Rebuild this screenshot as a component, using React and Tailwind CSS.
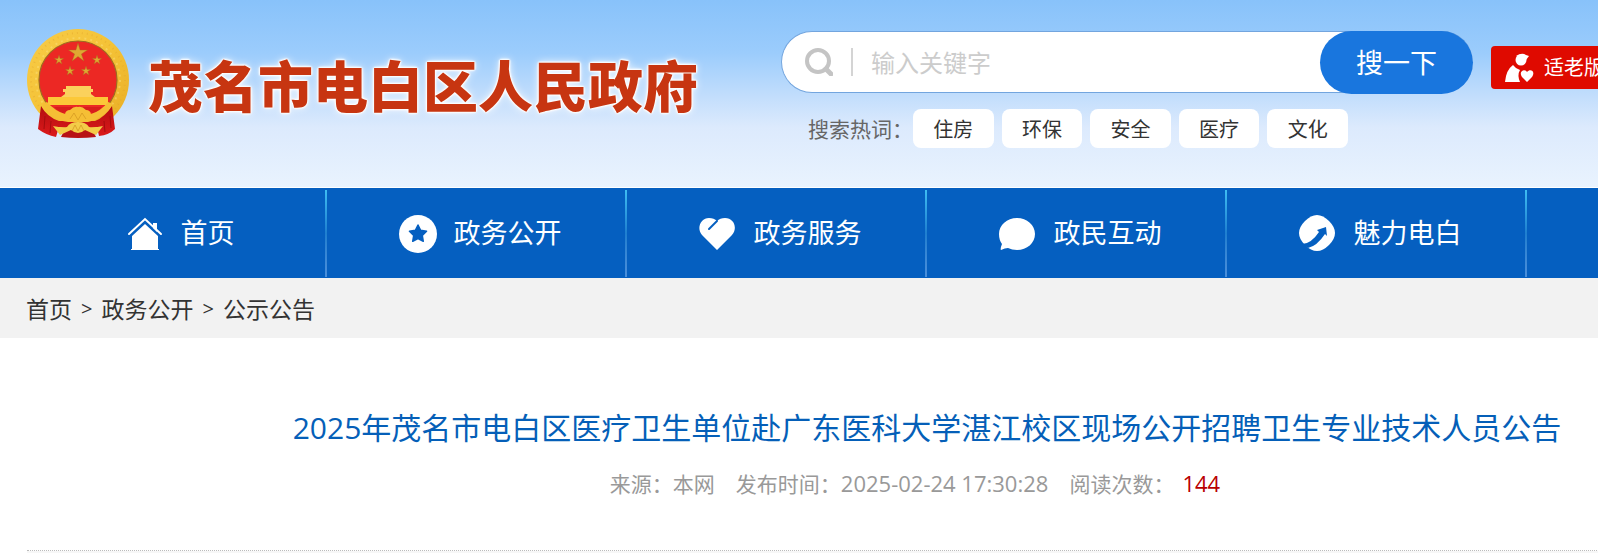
import React from 'react';

const hotWords = ['住房', '环保', '安全', '医疗', '文化'];

const star = (cx, cy, r, inner = 0.4) =>
  [...Array(10)]
    .map((_, i) => {
      const radius = i % 2 === 0 ? r : r * inner;
      const angle = (Math.PI / 5) * i - Math.PI / 2;
      return `${(cx + radius * Math.cos(angle)).toFixed(2)},${(cy + radius * Math.sin(angle)).toFixed(2)}`;
    })
    .join(' ');

const Emblem = () => (
  <svg viewBox="0 0 104 110" className="w-[104px] h-[110px] shrink-0" aria-hidden="true">
    <defs>
      <linearGradient id="gold" x1="0" y1="0" x2="1" y2="1">
        <stop offset="0" stopColor="#f8cc48" />
        <stop offset="0.5" stopColor="#f4c236" />
        <stop offset="1" stopColor="#e8ac24" />
      </linearGradient>
      <linearGradient id="drape" x1="0" y1="0" x2="0" y2="1">
        <stop offset="0" stopColor="#b30d10" />
        <stop offset="1" stopColor="#dc1a1b" />
      </linearGradient>
    </defs>
    <circle cx="52" cy="52" r="51" fill="url(#gold)" />
    <circle cx="52" cy="52" r="47" fill="none" stroke="#e0a02a" strokeWidth="2" strokeDasharray="1 4" opacity="0.4" />
    <circle cx="52" cy="52" r="42" fill="none" stroke="#fbe07a" strokeWidth="2" strokeDasharray="2 4" opacity="0.5" />
    <circle cx="52" cy="52" r="39" fill="#ec2824" stroke="#9d6a22" strokeWidth="1.2" />
    <g fill="#dfa832" stroke="#a8671f" strokeWidth="0.4">
      <polygon points={star(52, 25, 10, 0.36)} />
      <polygon points={star(33, 32, 5, 0.36)} />
      <polygon points={star(71, 32, 5, 0.36)} />
      <polygon points={star(44, 43, 5, 0.36)} />
      <polygon points={star(60, 43, 5, 0.36)} />
    </g>
    {/* gate tower */}
    <path d="M40 58h25v3h2v3h-2v2l4 3H35l4-3v-2h-2v-3h3z" fill="#fbd15c" />
    <path d="M22 69h60v8H22z" fill="#fcc838" />
    <path d="M28 79h48l-8 8q-4-5-9-5-7-3-14 0-5 0-9 5z" fill="#d81e1c" />
    {/* drapery */}
    <path d="M15 78 12 101q8 6 18 8l3-10 19 3 19-3 2 9q10-1 16-7l-3-23q-7 11-17 15H33q-12-4-18-15z" fill="url(#drape)" />
    <path d="M19 88l-1 13M25 93l-1 12M84 88l1 12M78 93l1 11" stroke="#a50c0e" strokeWidth="1" />
    <path d="M16 76q9 16 26 18h20q16-3 25-18l-5-2q-7 9-17 12-1-4-5-4-4-4-8-3-4-1-8 3-4 0-5 4-10-3-18-12z" fill="#f5bf35" />
    <path d="M35 109q17 2 35 0l-4-8H39z" fill="#b81215" />
    <path d="M27 98q9 2 14 1 3-5 11-5t11 5q5 1 14-1l-7 9-11-5q-7 6-14 0l-11 5z" fill="#f3cc48" />
    <path d="M44 91l4-6 4 7 4-7 4 6M46 103l3-6 3 6 3-6 3 6" fill="none" stroke="#d69a22" strokeWidth="0.8" />
  </svg>
);

const HomeIcon = () => (
  <svg viewBox="0 0 38 38" className="w-[38px] h-[38px]" aria-hidden="true">
    <path d="M27 8h4v9l-4-4z" fill="#fff" />
    <path d="M3 19 19 4l16 15" fill="none" stroke="#fff" strokeWidth="2" strokeLinecap="round" />
    <path d="M19 9 6 21v13H5v1h28v-1h-1V21z" fill="#fff" />
  </svg>
);

const StarIcon = () => (
  <svg viewBox="0 0 38 38" className="w-[38px] h-[38px]" aria-hidden="true">
    <circle cx="19" cy="19" r="19" fill="#fff" />
    <polygon points={star(19, 19, 9, 0.5)} fill="#055fc0" stroke="#055fc0" strokeWidth="1.5" strokeLinejoin="round" />
  </svg>
);

const HeartIcon = () => (
  <svg viewBox="0 0 38 38" className="w-[38px] h-[38px]" aria-hidden="true">
    <path d="M18 35 3 20C-3 13 2 3 10 3q5 0 8 3 3-3 8-3c9 0 13 10 7 17z" fill="#fff" />
    <path d="m10 14 8-8" stroke="#055fc0" strokeWidth="2" strokeLinecap="round" />
  </svg>
);

const ChatIcon = () => (
  <svg viewBox="0 0 38 38" className="w-[38px] h-[38px]" fill="#fff" aria-hidden="true">
    <path d="M18 3c10 0 18 7 18 16s-8 16-18 16q-5 0-9-2-3 0-7 2-1-1 1-6-3-4-3-10C0 10 8 3 18 3z" />
  </svg>
);

const ArrowIcon = () => (
  <svg viewBox="0 0 38 38" className="w-[38px] h-[38px]" aria-hidden="true">
    <path d="M18 0q6 0 12 6 6 6 6 12 0 6-6 12-6 6-12 6-6 0-12-6-6-6-6-12 0-6 6-12 6-6 12-6z" fill="#fff" />
    <path d="M3 29q9 0 17-12l-2-2 9-3 1 9-2-2Q18 31 9 33z" fill="#055fc0" />
  </svg>
);

const navItems = [
  { label: '首页', Icon: HomeIcon },
  { label: '政务公开', Icon: StarIcon },
  { label: '政务服务', Icon: HeartIcon },
  { label: '政民互动', Icon: ChatIcon },
  { label: '魅力电白', Icon: ArrowIcon },
];

const Header = () => (
  <header className="border-b border-white bg-[linear-gradient(to_bottom,#88c2fa_0%,#9bccfc_28%,#c3defc_52%,#dceafd_68%,#e9f3fe_100%)]">
    <div className="flex items-start px-[26px] pt-7 pb-[39px]">
      <a href="#home" className="flex items-center gap-[18px] shrink-0">
        <Emblem />
        <h1 className="pt-1.5 text-[55px] leading-[60px] font-black text-[#c73511] whitespace-nowrap [text-shadow:0_0_2px_#fff,0_0_2px_#fff,0_0_2px_#fff,0_0_3px_#fff,0_0_3px_#fff,0_0_8px_#fff]">
          茂名市电白区人民政府
        </h1>
      </a>

      <div className="ml-[83px] pt-[3px] w-[692px] shrink-0">
        <form className="flex h-[62px] rounded-full border border-r-0 border-[#73a5de] bg-white items-center pl-[23px]" onSubmit={(e) => e.preventDefault()}>
          <svg viewBox="0 0 28 28" className="w-7 h-7 shrink-0" fill="none" stroke="#c4c4c4" aria-hidden="true">
            <circle cx="13" cy="13" r="11" strokeWidth="4" />
            <path d="m21 21 5 5" strokeWidth="5" strokeLinecap="round" />
          </svg>
          <span className="ml-[18px] w-0.5 h-7 bg-[#d4d4d4]" />
          <input
            type="text"
            aria-label="输入关键字"
            placeholder="输入关键字"
            className="ml-[18px] min-w-0 flex-1 h-full text-2xl outline-none placeholder:text-[#ccc]"
          />
          <button type="submit" className="w-[153px] h-[63px] shrink-0 pt-0.5 rounded-full bg-[#1976de] text-white text-[27px]">
            搜一下
          </button>
        </form>
        <div className="mt-4 ml-[27px] flex items-center whitespace-nowrap">
          <span className="w-[105px] shrink-0 pt-0.5 text-[21px] text-[#666]">搜索热词：</span>
          <div className="grid grid-cols-5 gap-2 w-[435px]">
            {hotWords.map((word) => (
              <a key={word} href="#search" className="h-[39px] pt-0.5 rounded-lg bg-white flex items-center justify-center text-xl text-[#333]">
                {word}
              </a>
            ))}
          </div>
        </div>
      </div>

      <button type="button" className="mt-[18px] ml-[18px] h-[43px] shrink-0 rounded bg-[#df0a00] text-white text-xl flex items-center gap-[9px] px-3">
        <svg viewBox="0 0 32 32" className="w-8 h-8" fill="#fff" aria-hidden="true">
          <circle cx="18" cy="8" r="5.500" />
          <path d="M13 4q6-4 10-1l3 1-3 4z" />
          <path d="M2 30Q3 18 10 13q3 4 7 5-3 5 0 12z" />
          <path d="m24 30-5-5c-4-6 3-9 5-5 3-4 9-1 5 5z" />
        </svg>
        适老版
      </button>
    </div>
  </header>
);

const Nav = () => (
  <nav className="bg-[#055fc0] px-[27px]">
    <ul className="flex">
      {navItems.map(({ label, Icon }) => (
        <li key={label} className="flex w-[300px] h-[90px] shrink-0 pt-0.5 pb-px">
          <a href="#nav" className="flex flex-1 items-center justify-center gap-[17px] pl-2 text-[27px] text-white whitespace-nowrap">
            <Icon />
            {label}
          </a>
          <span className="w-0.5 bg-linear-to-b from-[#3fbdf2] via-[#1f7fd0] to-[#4b8fdb]" />
        </li>
      ))}
    </ul>
  </nav>
);

const Breadcrumb = () => (
  <div className="bg-[#f2f2f2] h-[60px] px-[26px] pt-0.5 flex items-center gap-[9px] text-[23px] text-[#333]">
    <a href="#home">首页</a>
    <span className="text-xl">&gt;</span>
    <a href="#open">政务公开</a>
    <span className="text-xl">&gt;</span>
    <a href="#notice">公示公告</a>
  </div>
);

const Article = () => (
  <main className="px-[27px]">
    <div className="pt-[67px] pb-[50px] border-b border-dotted border-[#bbb] text-center whitespace-nowrap">
      <h2 className="text-[30px] leading-[46px] text-[#055fb8]">
        2025年茂名市电白区医疗卫生单位赴广东医科大学湛江校区现场公开招聘卫生专业技术人员公告
      </h2>
      <div className="mt-4 leading-8 flex items-baseline justify-center gap-[21px] text-[21px] text-[#999] pr-6">
        <span>来源：本网</span>
        <span>
          发布时间：<time className="text-[22px]">2025-02-24 17:30:28</time>
        </span>
        <span>
          阅读次数：<b className="ml-2 font-normal text-[22px] text-[#b90000]">144</b>
        </span>
      </div>
    </div>
    <div className="h-0.5 bg-[#f7f7f7]" />
  </main>
);

const App = () => {
  return (
    <div className="overflow-x-hidden bg-white font-['Open_Sans','Noto_Sans_CJK_SC',sans-serif]">
      {/* the site keeps its 1800px column and runs off narrower windows */}
      <div className="min-w-[1854px]">
        <Header />
        <Nav />
        <Breadcrumb />
        <Article />
      </div>
    </div>
  );
};

export default App;
